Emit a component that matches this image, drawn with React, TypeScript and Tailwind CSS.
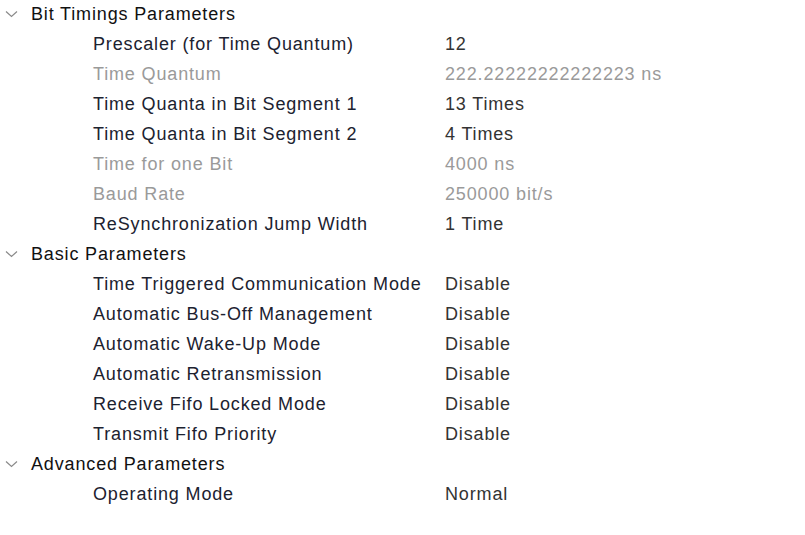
const groups = [
  {
    title: "Bit Timings Parameters",
    rows: [
      { label: "Prescaler (for Time Quantum)", value: "12" },
      { label: "Time Quantum", value: "222.22222222222223 ns", dim: true },
      { label: "Time Quanta in Bit Segment 1", value: "13 Times" },
      { label: "Time Quanta in Bit Segment 2", value: "4 Times" },
      { label: "Time for one Bit", value: "4000 ns", dim: true },
      { label: "Baud Rate", value: "250000 bit/s", dim: true },
      { label: "ReSynchronization Jump Width", value: "1 Time" },
    ],
  },
  {
    title: "Basic Parameters",
    rows: [
      { label: "Time Triggered Communication Mode", value: "Disable" },
      { label: "Automatic Bus-Off Management", value: "Disable" },
      { label: "Automatic Wake-Up Mode", value: "Disable" },
      { label: "Automatic Retransmission", value: "Disable" },
      { label: "Receive Fifo Locked Mode", value: "Disable" },
      { label: "Transmit Fifo Priority", value: "Disable" },
    ],
  },
  {
    title: "Advanced Parameters",
    rows: [{ label: "Operating Mode", value: "Normal" }],
  },
];

function Chevron() {
  return (
    <svg width="13" height="8" viewBox="0 0 13 8" className="ml-[5px] mr-[13px]">
      <path d="M1 1.5 L6.5 6.5 L12 1.5" fill="none" stroke="#8a8a8a" strokeWidth="1.2" />
    </svg>
  );
}

export default function App() {
  return (
    <div className="w-[805px] h-[535px] bg-white text-[18px] tracking-[0.85px] font-['Liberation_Sans',Arial,sans-serif]">
      {groups.map((g) => (
        <div key={g.title}>
          <div className="h-[30px] pb-[2px] flex items-center text-[#111]">
            <Chevron />
            <span>{g.title}</span>
          </div>
          {g.rows.map((r) => (
            <div
              key={r.label}
              className={`h-[30px] pb-[2px] flex items-center ${r.dim ? "text-[#9a9a9a]" : "text-[#1c2230]"}`}
            >
              <span className="pl-[93px] w-[445px] shrink-0">{r.label}</span>
              <span className={r.dim ? "text-[#9a9a9a]" : "text-[#333]"}>{r.value}</span>
            </div>
          ))}
        </div>
      ))}
    </div>
  );
}
